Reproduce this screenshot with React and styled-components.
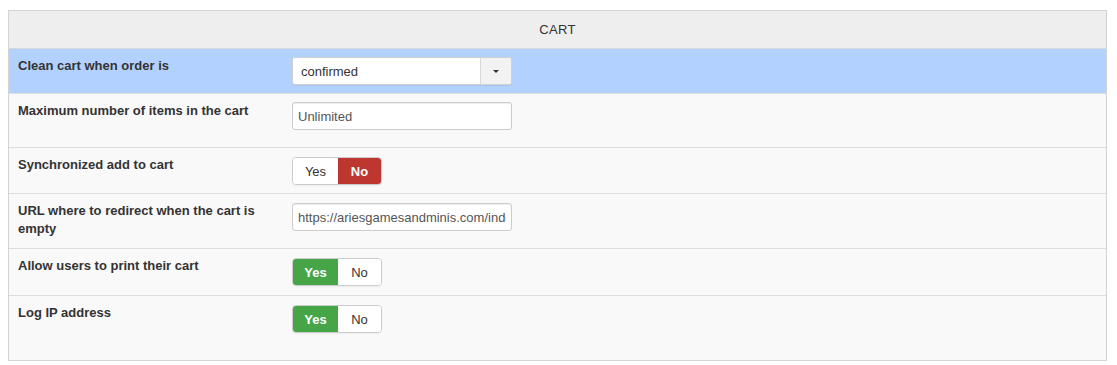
import React from 'react';
import styled, { createGlobalStyle } from 'styled-components';

const GlobalStyle = createGlobalStyle`
  html, body {
    margin: 0;
    padding: 0;
    background: #fff;
  }
  body {
    font-family: "Liberation Sans", Arial, sans-serif;
    font-size: 13px;
    color: #333;
  }
`;

const Page = styled.div`
  padding: 10px 10px 0 8px;
`;

const Panel = styled.div`
  border: 1px solid #d4d4d4;
  background: #f9f9f9;
  height: 349px;
`;

const Header = styled.div`
  height: 37px;
  background: #eeeeee;
  border-bottom: 1px solid #d9d9d9;
  display: flex;
  align-items: center;
  justify-content: center;
  font-size: 13px;
  color: #333;
  letter-spacing: 0.3px;
`;

const Row = styled.div`
  display: grid;
  grid-template-columns: 274px 1fr;
  align-items: start;
  padding: 8px 9px 0;
  height: ${(p) => p.h}px;
  box-sizing: border-box;
  background: ${(p) => (p.active ? '#b3d1ff' : '#f9f9f9')};
  border-top: ${(p) => (p.first ? 'none' : '1px solid #dddddd')};
`;

const Label = styled.div`
  font-weight: bold;
  line-height: 18px;
  padding-right: 10px;
  color: #333;
`;

const Select = styled.div`
  width: 220px;
  height: 28px;
  box-sizing: border-box;
  display: flex;
  align-items: stretch;
  background: #fff;
  border: 1px solid #d0d0d0;
  border-radius: 3px;
  box-shadow: 0 1px 1px rgba(0, 0, 0, 0.06);
`;

const SelectValue = styled.div`
  flex: 1;
  display: flex;
  align-items: center;
  padding-left: 8px;
  color: #333;
`;

const SelectArrow = styled.div`
  width: 30px;
  background: #f2f2f2;
  border-left: 1px solid #d8d8d8;
  border-radius: 0 3px 3px 0;
  display: flex;
  align-items: center;
  justify-content: center;

  &::after {
    content: '';
    border-left: 3.5px solid transparent;
    border-right: 3.5px solid transparent;
    border-top: 3.5px solid #333;
  }
`;

const TextInput = styled.input`
  width: 220px;
  height: 28px;
  box-sizing: border-box;
  margin: ${(p) => (p.offset ? '1px' : '0')} 0 0;
  padding: 4px 5px;
  font-family: inherit;
  font-size: 13px;
  color: #555;
  background: #fff;
  border: 1px solid #cccccc;
  border-radius: 3px;
  box-shadow: inset 0 1px 1px rgba(0, 0, 0, 0.075);
  outline: none;
`;

const Toggle = styled.div`
  display: inline-flex;
  margin-top: 1px;
  height: 28px;
  box-sizing: border-box;
  border: 1px solid #cccccc;
  border-radius: 4px;
  overflow: hidden;
  box-shadow: 0 1px 2px rgba(0, 0, 0, 0.05);
  justify-self: start;
`;

const ToggleBtn = styled.div`
  display: flex;
  align-items: center;
  justify-content: center;
  width: ${(p) => p.w}px;
  font-size: 13px;
  color: ${(p) => (p.on ? '#fff' : '#333')};
  font-weight: ${(p) => (p.on ? 'bold' : 'normal')};
  background: ${(p) => (p.on ? p.color : '#fff')};
`;

const YesNo = ({ value }) => (
  <Toggle>
    <ToggleBtn w={45} on={value === 'yes'} color="#46a546">Yes</ToggleBtn>
    <ToggleBtn w={43} on={value === 'no'} color="#bd362f">No</ToggleBtn>
  </Toggle>
);

export default function App() {
  return (
    <Page>
      <GlobalStyle />
      <Panel>
        <Header>CART</Header>
        <Row first active h={44}>
          <Label>Clean cart when order is</Label>
          <Select>
            <SelectValue>confirmed</SelectValue>
            <SelectArrow />
          </Select>
        </Row>
        <Row h={54}>
          <Label>Maximum number of items in the cart</Label>
          <TextInput readOnly value="Unlimited" />
        </Row>
        <Row h={46}>
          <Label>Synchronized add to cart</Label>
          <YesNo value="no" />
        </Row>
        <Row h={55}>
          <Label>URL where to redirect when the cart is empty</Label>
          <TextInput offset readOnly value="https://ariesgamesandminis.com/index.php" />
        </Row>
        <Row h={47}>
          <Label>Allow users to print their cart</Label>
          <YesNo value="yes" />
        </Row>
        <Row h={64}>
          <Label>Log IP address</Label>
          <YesNo value="yes" />
        </Row>
      </Panel>
    </Page>
  );
}
